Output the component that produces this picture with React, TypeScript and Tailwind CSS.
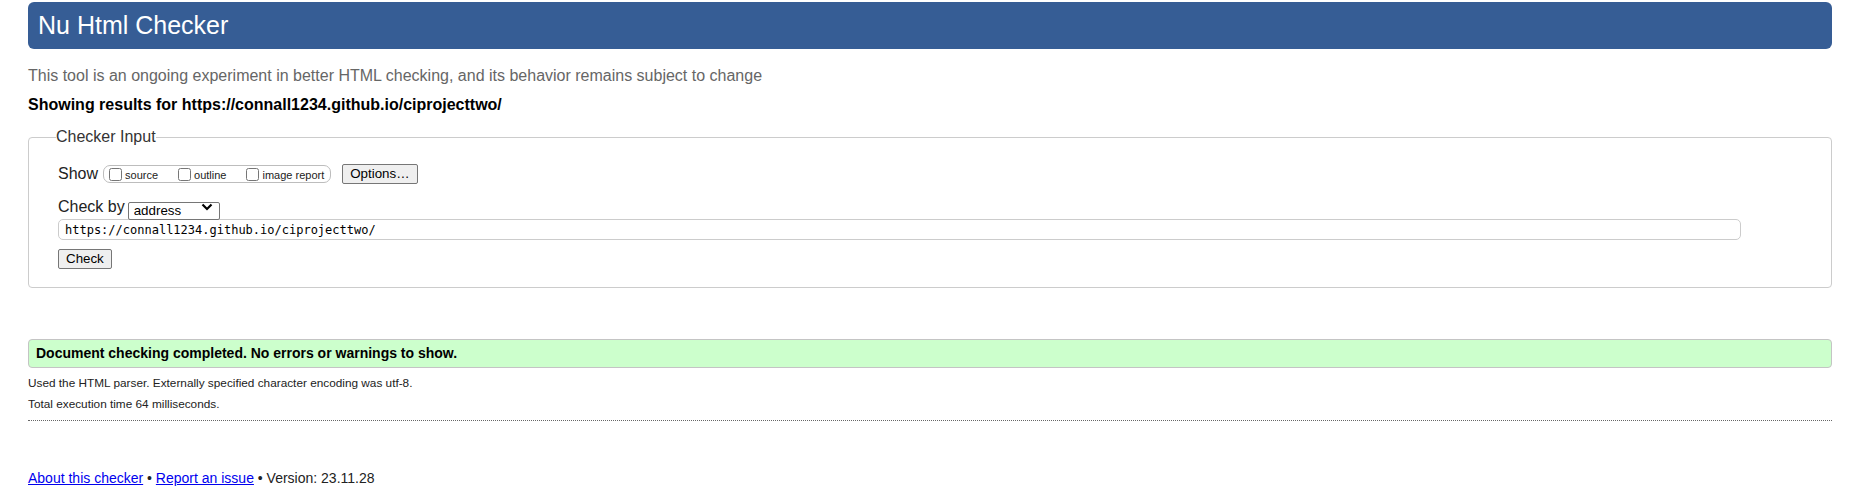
import React from "react";

const sans = { fontFamily: '"Liberation Sans", Arial, sans-serif' };

function NativeButton({ children }: { children: React.ReactNode }) {
  return (
    <button
      type="button"
      className="h-[20px] px-[7px] bg-[#efefef] border border-[#767676] rounded-[2px] text-[13.33px] leading-[16px] text-black"
    >
      {children}
    </button>
  );
}

function Option({ label, last }: { label: string; last?: boolean }) {
  return (
    <label className={`flex items-center ${last ? "" : "mr-[15px]"}`}>
      <input type="checkbox" className="w-[13px] h-[13px] m-0 ml-[5px] mr-[3px]" />
      <span className="text-[11px] leading-[13px] mt-[2px]">{label}</span>
    </label>
  );
}

export default function App() {
  return (
    <div className="min-h-screen bg-white text-[#222]" style={sans}>
      <div className="pl-[28px] pr-[44px] pt-[2px] pb-[20px]">
        <h1 className="h-[47px] rounded-[6px] bg-[#365d95] flex items-center px-[10px] text-white text-[25px] font-normal">
          Nu Html Checker
        </h1>

        <p className="mt-[18px] text-[16px] leading-[18px] text-[#666]">
          This tool is an ongoing experiment in better HTML checking, and its behavior remains subject to change
        </p>

        <p className="mt-[11px] text-[16px] leading-[18px] font-bold text-black">
          Showing results for https://connall1234.github.io/ciprojecttwo/
        </p>

        <fieldset className="mt-[14px] border border-[#cccccc] rounded-[4px] pl-[29px] pr-[30px] pt-[18px] pb-[18px]">
          <legend className="-ml-[2px] px-0 text-[16px] leading-[18px] text-[#333]">Checker Input</legend>

          <div className="flex items-center h-[20px]">
            <span className="text-[16px] leading-[18px]">Show</span>
            <div className="ml-[5px] h-[18px] flex items-center border border-[#bdbdbd] rounded-[7px] pr-[6px]">
              <Option label="source" />
              <Option label="outline" />
              <Option label="image report" last />
            </div>
            <div className="ml-[11px] flex">
              <NativeButton>Options…</NativeButton>
            </div>
          </div>

          <div className="mt-[13px] flex items-center h-[20px]">
            <span className="text-[16px] leading-[18px]">Check by</span>
            <div className="relative ml-[3px] w-[92px] h-[18px]">
              <select
                defaultValue="address"
                className="appearance-none w-full h-full border border-[#767676] rounded-[2px] bg-white pl-[5px] text-[13.33px] leading-[16px] text-black"
              >
                <option value="address">address</option>
                <option value="file">file upload</option>
                <option value="text">text input</option>
              </select>
              <svg
                className="absolute right-[7px] top-[5px] pointer-events-none"
                width="12"
                height="8"
                viewBox="0 0 12 8"
                fill="none"
              >
                <path d="M1.5 1.5 L6 6 L10.5 1.5" stroke="#000" strokeWidth="2.2" />
              </svg>
            </div>
          </div>

          <input
            type="text"
            defaultValue="https://connall1234.github.io/ciprojecttwo/"
            className="mt-[2px] block w-[1683px] h-[21px] border border-[#cccccc] rounded-[5px] px-[6px] text-[12px] text-black"
            style={{ fontFamily: '"DejaVu Sans Mono", "Liberation Mono", monospace' }}
          />

          <div className="mt-[9px] flex">
            <NativeButton>Check</NativeButton>
          </div>
        </fieldset>

        <div className="mt-[51px] h-[29px] flex items-center bg-[#ccffcc] border border-[#c4c4c4] rounded-[4px] pl-[7px]">
          <p className="text-[14px] font-bold text-black">Document checking completed. No errors or warnings to show.</p>
        </div>

        <p className="mt-[8px] text-[11.8px] leading-[14px]">
          Used the HTML parser. Externally specified character encoding was utf-8.
        </p>
        <p className="mt-[7px] text-[11.8px] leading-[14px]">Total execution time 64 milliseconds.</p>

        <hr className="mt-[9px] border-0 border-t border-dotted border-[#666]" />

        <p className="mt-[49px] text-[14px] leading-[16px]">
          <a href="#" className="text-[#0000ee] underline">About this checker</a>
          {" • "}
          <a href="#" className="text-[#0000ee] underline">Report an issue</a>
          {" • Version: 23.11.28"}
        </p>
      </div>
    </div>
  );
}
